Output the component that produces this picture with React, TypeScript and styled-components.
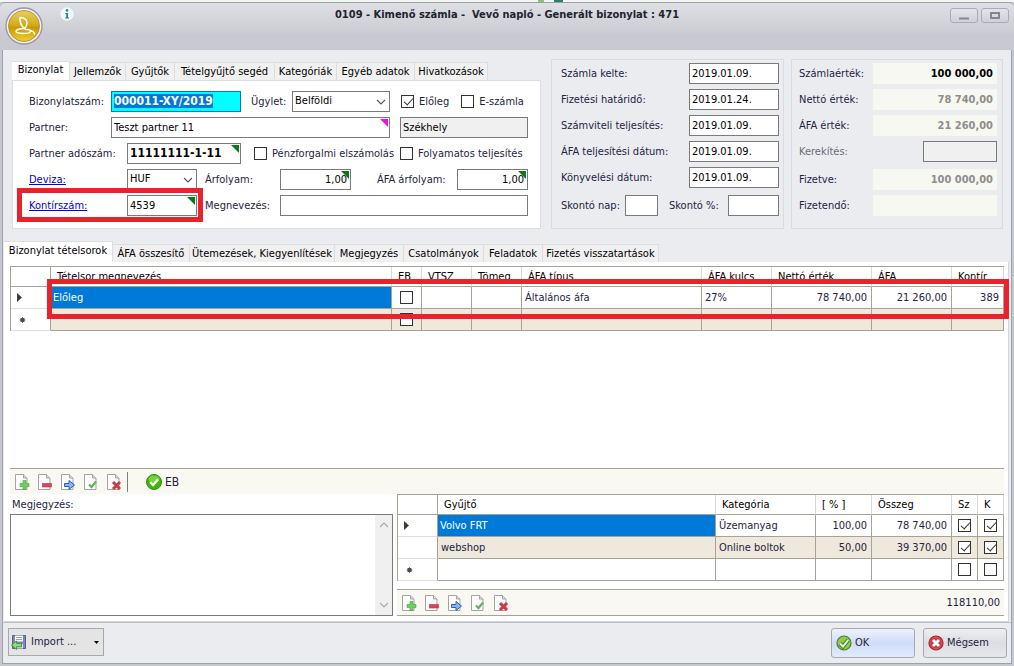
import React, { useEffect, useRef } from "react";
import styled, { createGlobalStyle, css } from "styled-components";

const ink = "#23233f";
const line = "#7a7a7a";
const gridLine = "#a5a396";
const blue = "#007ad9";
const red = "#e9222c";

const GlobalStyle = createGlobalStyle`
  * { box-sizing: border-box; }
  body { margin: 0; background: #c6c8cf; }
  body, input, select, textarea, button, table {
    font-family: "DejaVu Sans Condensed", "DejaVu Sans", sans-serif;
    font-size: 11px;
    line-height: 14px;
    color: ${ink};
  }
`;

/* ---------- window frame ---------- */

const Window = styled.div`
  min-height: 100vh;
  display: flex;
  flex-direction: column;
  background: #c6c8cf;
`;

const BackStrip = styled.div`
  height: 2px;
  flex: none;
  background: #f4f6f4;
  display: flex;
  justify-content: center;
  gap: 10px;
  padding-left: 86px;
`;

const StripMark = styled.span<{ $color: string; $width: number }>`
  width: ${(p) => p.$width}px;
  background: ${(p) => p.$color};
`;

const TitleBar = styled.header`
  height: 48px;
  flex: none;
  display: grid;
  grid-template-columns: 1fr auto 1fr;
  align-items: start;
  padding: 4px 5px 0 5px;
  border-top: 1px solid #9aa0a2;
  border-radius: 5px 5px 0 0;
  background: linear-gradient(#dfe0e5, #c9cad1 70%, #c8c9d0);
`;

const Brand = styled.div`
  display: flex;
  align-items: flex-start;
  gap: 17px;
`;

const Title = styled.h1`
  margin: 0;
  padding-top: 1px;
  font-size: 11px;
  line-height: 14px;
  font-weight: bold;
  white-space: pre;
  color: #22232e;
`;

const WindowButtons = styled.div`
  display: flex;
  justify-content: flex-end;
  gap: 3px;
`;

const WindowButton = styled.button`
  width: 28px;
  height: 15px;
  margin-top: 1px;
  padding: 0;
  display: grid;
  place-items: center;
  border: 1px solid #a9abb4;
  border-radius: 3px;
  background: linear-gradient(#e4e5ea, #cfd0d7);
`;

const Client = styled.main`
  flex: 1;
  display: flex;
  flex-direction: column;
  margin: 0 2px 2px;
  border: solid #9fa1aa;
  border-width: 0 1px 1px;
  background: #ebecf0;
`;

/* ---------- upper form ---------- */

const Upper = styled.div`
  display: flex;
  align-items: stretch;
  padding: 9px 8px 0 9px;
`;

const Header = styled.section`
  flex: 1;
  display: flex;
  flex-direction: column;
  padding-top: 2px;
  margin-right: 10px;
`;

const TabList = styled.div`
  display: flex;
  align-items: flex-end;
  height: 19px;
`;

const Tab = styled.button<{ $active?: boolean; $width: number }>`
  width: ${(p) => p.$width}px;
  height: 18px;
  padding: 0;
  border: 1px solid #dcdde1;
  border-width: 1px 1px 0 0;
  background: #f0f0f1;
  color: #000;
  white-space: nowrap;
  ${(p) =>
    p.$active &&
    css`
      height: 100%;
      padding-bottom: 3px;
      background: #fff;
    `}
`;

const FormPage = styled.form`
  flex: 1;
  display: flex;
  flex-direction: column;
  gap: 5px;
  padding: 10px 12px 12px 16px;
  border: 1px solid #dcdde1;
  background: #fff;
`;

const Row = styled.div<{ $cols: string }>`
  position: relative;
  display: grid;
  grid-template-columns: ${(p) => p.$cols};
  align-items: center;
  height: 21px;
`;

const Label = styled.label<{ $pad?: number; $dim?: boolean }>`
  padding-left: ${(p) => p.$pad ?? 0}px;
  padding-top: 1px;
  white-space: nowrap;
  ${(p) => p.$dim && "color: #6b6b78;"}
`;

const LinkLabel = styled.a`
  padding-top: 1px;
  color: #0000e0;
  text-decoration: underline;
`;

const Field = styled.input<{ $right?: boolean }>`
  width: 100%;
  height: 21px;
  padding: 0 3px 1px 2px;
  border: 1px solid ${line};
  border-radius: 0;
  outline: none;
  background: #fff;
  color: #000;
  text-align: ${(p) => (p.$right ? "right" : "left")};
`;

const NumberField = styled(Field)`
  border-color: #0078d7;
  background: #0ff;
  font-size: 12px;
  font-weight: bold;
  &::selection {
    background: #0078d7;
    color: #fff;
  }
`;

const BoldField = styled(Field)`
  font-size: 12px;
  font-weight: bold;
`;

const DisabledField = styled(Field)`
  background: #f0f0f0;
`;

const Marked = styled.div<{ $color?: string }>`
  position: relative;
  height: 21px;
  &::after {
    content: "";
    position: absolute;
    top: 2px;
    right: 2px;
    border: 4px solid;
    border-color: ${(p) => p.$color ?? "#0a7a16"} ${(p) => p.$color ?? "#0a7a16"} transparent transparent;
  }
`;

const SelectBox = styled.div`
  position: relative;
  height: 21px;
  svg {
    position: absolute;
    right: 4px;
    top: 8px;
    pointer-events: none;
  }
`;

const Select = styled.select`
  appearance: none;
  width: 100%;
  height: 21px;
  padding: 0 18px 1px 2px;
  border: 1px solid ${line};
  border-radius: 0;
  background: #fff;
  color: #000;
`;

const Check = styled.input.attrs({ type: "checkbox" })`
  appearance: none;
  position: relative;
  flex: none;
  width: 13px;
  height: 13px;
  margin: 0;
  border: 1px solid #333;
  background: #fff;
  &:checked::after {
    content: "";
    position: absolute;
    left: 4px;
    top: 0;
    width: 4px;
    height: 8px;
    border: solid #333;
    border-width: 0 1px 1px 0;
    transform: rotate(42deg);
  }
`;

const CheckLabel = styled.label<{ $pad?: number }>`
  display: flex;
  align-items: center;
  gap: 5px;
  padding-left: ${(p) => p.$pad ?? 0}px;
  white-space: nowrap;
`;

const Checks = styled.div`
  display: flex;
  gap: 12px;
  padding-left: 11px;
`;

const Inset = styled.div`
  padding-left: 10px;
`;

const Highlight = styled.div`
  position: absolute;
  border: 5px solid ${red};
  pointer-events: none;
`;

const AccountHighlight = styled(Highlight)`
  left: -12px;
  top: -7px;
  width: 186px;
  height: 34px;
`;

const LineHighlight = styled(Highlight)`
  left: 37px;
  right: -5px;
  top: 13px;
  height: 40px;
`;

const Group = styled.section<{ $width: number; $pad: string }>`
  flex: none;
  width: ${(p) => p.$width}px;
  display: flex;
  flex-direction: column;
  gap: 5px;
  padding: ${(p) => p.$pad};
  border: 1px solid #dadbdf;
  & + & {
    margin-left: 7px;
  }
`;

const Spaced = styled(Row)`
  margin-top: 2px;
`;

const Total = styled.output<{ $strong?: boolean }>`
  height: 21px;
  padding: 4px 4px 0 0;
  background: #f8f8f3;
  font-weight: bold;
  text-align: right;
  color: ${(p) => (p.$strong ? "#000" : "#8d8d8d")};
`;

/* ---------- line items ---------- */

const Lower = styled.section`
  flex: 1;
  display: flex;
  flex-direction: column;
  padding: 12px 2px 0 1px;
`;

const LowerTabs = styled(TabList)`
  height: 21px;
`;

const LowerPage = styled.div`
  flex: 1;
  display: flex;
  flex-direction: column;
  padding: 4px 4px 5px 6px;
  background: #fff;
  border: solid #d5d6da;
  border-width: 0 1px 1px 0;
`;

const GridArea = styled.div`
  position: relative;
  flex: 1;
`;

const Grid = styled.table`
  width: 100%;
  table-layout: fixed;
  border-spacing: 0;
  border: solid ${gridLine};
  border-width: 1px 0 0 1px;
  th {
    height: 20px;
    padding: 0 0 0 6px;
    border-right: 1px solid #d8d8d4;
    border-bottom: 1px solid ${gridLine};
    font-weight: normal;
    text-align: left;
    white-space: nowrap;
    color: #000;
  }
  th:first-child {
    border-right-color: ${gridLine};
  }
`;

const BodyRow = styled.tr<{ $shade?: boolean }>`
  td {
    background: ${(p) => (p.$shade ? "#eee9dc" : "#fff")};
  }
`;

type CellKind = "text" | "number" | "check" | "selected";

const Cell = styled.td<{ $kind?: CellKind }>`
  height: 22px;
  padding: 0 4px 0 3px;
  border: solid ${gridLine};
  border-width: 0 1px 1px 0;
  white-space: nowrap;
  ${(p) => p.$kind === "number" && "text-align: right;"}
  ${(p) =>
    p.$kind === "check" &&
    css`
      padding: 0;
      text-align: center;
      input {
        display: block;
        margin: 0 auto;
      }
    `}
  &&& {
    ${(p) => p.$kind === "selected" && `background: ${blue}; color: #fff; padding-left: 2px;`}
  }
`;

const RowHead = styled.th<{ scope?: string }>`
  &&& {
    height: 22px;
    border-right-color: ${gridLine};
    border-bottom-color: #dedede;
    padding-left: 6px;
  }
  && svg {
    display: block;
  }
`;

const ToolStrip = styled.div`
  display: flex;
  align-items: center;
  gap: 7px;
  height: 26px;
  flex: none;
  padding-left: 4px;
  border-top: 1px solid ${gridLine};
  background: #f9f8f3;
`;

const FooterStrip = styled(ToolStrip)`
  height: 27px;
  margin-top: 8px;
  border-bottom: 1px solid ${gridLine};
`;

const Tool = styled.button`
  width: 16px;
  height: 16px;
  padding: 0;
  border: 0;
  background: none;
  svg {
    display: block;
  }
`;

const Divider = styled.span`
  width: 1px;
  height: 20px;
  margin-left: -2px;
  background: #7d7d7d;
`;

const EbButton = styled.button`
  display: flex;
  align-items: center;
  gap: 3px;
  margin-left: 11px;
  padding: 0;
  border: 0;
  background: none;
  font-size: 12px;
`;

const Sum = styled.output`
  margin-left: auto;
  padding-right: 4px;
`;

const Split = styled.div`
  flex: none;
  display: grid;
  grid-template-columns: 383px 1fr;
  column-gap: 4px;
`;

const Notes = styled.div`
  display: flex;
  flex-direction: column;
  padding-top: 2px;
  label {
    padding: 2px 2px 0;
    height: 18px;
  }
`;

const NotesBox = styled.div`
  flex: 1;
  display: flex;
  border: 1px solid ${line};
`;

const NotesText = styled.textarea`
  flex: 1;
  min-width: 0;
  padding: 3px;
  border: 0;
  outline: none;
  resize: none;
  background: #fff;
`;

const ScrollTrack = styled.div`
  width: 17px;
  display: flex;
  flex-direction: column;
  justify-content: space-between;
  align-items: center;
  padding: 7px 0;
  background: #f0f0f0;
`;

const Collectors = styled.div`
  display: flex;
  flex-direction: column;
`;

/* ---------- bottom bar ---------- */

const BottomBar = styled.footer`
  flex: none;
  display: flex;
  align-items: flex-start;
  height: 41px;
  padding: 5px 4px 0 5px;
  border-top: 1px solid #bdbfc6;
`;

const ImportButton = styled.button`
  display: flex;
  align-items: center;
  gap: 4px;
  width: 96px;
  height: 28px;
  margin-right: auto;
  padding: 0 4px 0 2px;
  border: 1px solid #a8a8a8;
  background: #e4e4e4;
  span {
    flex: 1;
    text-align: left;
  }
`;

const ActionButton = styled.button<{ $primary?: boolean }>`
  display: flex;
  align-items: center;
  gap: 3px;
  width: 84px;
  height: 30px;
  margin-left: 8px;
  padding: 0 4px;
  border: 1px solid #a7a9b2;
  border-radius: 3px;
  background: ${(p) =>
    p.$primary ? "linear-gradient(#eef2fc, #cfdcf8 50%, #e2ebfd)" : "linear-gradient(#efeff2, #dcdde2 50%, #e6e7eb)"};
`;

/* ---------- drawings ---------- */

const Logo = () => (
  <svg width="38" height="38" viewBox="0 0 38 38" aria-hidden="true">
    <defs>
      <linearGradient id="gold" x1="0" y1="0" x2="0" y2="1">
        <stop offset="0" stopColor="#e9cf62" />
        <stop offset="0.45" stopColor="#d5ad1e" />
        <stop offset="0.55" stopColor="#c79a04" />
        <stop offset="1" stopColor="#f2cf2a" />
      </linearGradient>
    </defs>
    <circle cx="19" cy="19" r="18" fill="#f3f1f6" stroke="#9c98ac" strokeWidth="1.4" />
    <circle cx="19" cy="19" r="15.5" fill="url(#gold)" stroke="#b08a16" strokeWidth="0.8" />
    <path d="M15 10.500c4 0 7 2 7 5.500 0 2-1 4-2.500 5.500-3-2.500-5-6-4.500-11z" fill="none" stroke="#fff" strokeWidth="1.500" />
    <path d="M19.500 21.500c-4 0-8.500 1-8.500 2.800s4 2.200 7.500 2.200 7-.8 7-2.300-2.500-1.900-5-1.700M25.500 23.500c2 .2 3.500 1.500 4 3.500" fill="none" stroke="#fff" strokeWidth="1.500" strokeLinecap="round" />
  </svg>
);

const InfoIcon = () => (
  <svg width="14" height="14" viewBox="0 0 14 14" aria-hidden="true">
    <circle cx="7" cy="7" r="6.7" fill="#f2f7fa" />
    <circle cx="7" cy="3.4" r="1.3" fill="#159aa8" />
    <path d="M5.200 6h2.800v4.400h1v1h-3.800v-1h1V7h-1z" fill="#1683a0" />
  </svg>
);

const Chevron = ({ up, color = "#555" }: { up?: boolean; color?: string }) => (
  <svg width="10" height="6" viewBox="0 0 10 6" aria-hidden="true">
    <path d={up ? "M1 5l4-4 4 4" : "M1 1l4 4 4-4"} fill="none" stroke={color} strokeWidth="1.1" />
  </svg>
);

type Badge = "add" | "remove" | "move" | "accept" | "delete";

const badges: Record<Badge, React.ReactNode> = {
  add: <path d="M9 6.500h3v3h3v3h-3v3H9v-3H6v-3h3z" fill="#6fcf5c" stroke="#45a63f" strokeWidth="0.6" />,
  remove: <rect x="5.500" y="9.500" width="9" height="3.500" fill="#dd4557" stroke="#b83547" strokeWidth="0.6" />,
  move: <path d="M4.500 9.500h4.500v-3l5.500 4.500-5.500 4.500v-3H4.500z" fill="#8ab4f0" stroke="#2b5fb5" />,
  accept: <path d="M6 10.500l2.500 2.500 4.500-5.500" fill="none" stroke="#62b558" strokeWidth="2.200" />,
  delete: <path d="M7 8l7 7M14 8l-7 7" fill="none" stroke="#cf3a42" strokeWidth="3" />,
};

const PageIcon = ({ badge }: { badge: Badge }) => (
  <svg width="16" height="16" viewBox="0 0 16 16" aria-hidden="true">
    <path d="M1.500.5h8l3.500 3.500v11.500H1.500z" fill="#fdfdfd" />
    <path d="M9.500.5h-8v15H13V4z" fill="none" stroke="#a3a3a3" />
    <path d="M9.500.5V4H13" fill="#dcdcdc" stroke="#a3a3a3" />
    {badges[badge]}
  </svg>
);

const OkCircle = () => (
  <svg width="16" height="16" viewBox="0 0 16 16" aria-hidden="true">
    <circle cx="8" cy="8" r="7.500" fill="#42b50a" stroke="#2f8f06" />
    <ellipse cx="8" cy="5" rx="5.500" ry="3.500" fill="#74d33c" />
    <path d="M4.200 8l2.800 3 5-5.500" fill="none" stroke="#fff" strokeWidth="2.400" />
  </svg>
);

const AcceptIcon = () => (
  <svg width="16" height="16" viewBox="0 0 16 16" aria-hidden="true">
    <circle cx="8" cy="8" r="7" fill="#8ccb55" stroke="#4b7f27" strokeWidth="1.200" />
    <path d="M4 8.500l3 3 5.200-6.500" fill="none" stroke="#4b7f27" strokeWidth="4" />
    <path d="M4 8.500l3 3 5.200-6.500" fill="none" stroke="#e4f6d4" strokeWidth="2" />
  </svg>
);

const CancelIcon = () => (
  <svg width="16" height="16" viewBox="0 0 16 16" aria-hidden="true">
    <circle cx="8" cy="8" r="7" fill="#dc4a50" stroke="#a8242b" strokeWidth="1.200" />
    <path d="M4.800 4.800l6.400 6.400M11.200 4.800l-6.400 6.400" fill="none" stroke="#a8242b" strokeWidth="4.600" />
    <path d="M5 5l6 6M11 5l-6 6" fill="none" stroke="#fff" strokeWidth="3" />
  </svg>
);

const ImportIcon = () => (
  <svg width="16" height="16" viewBox="0 0 16 16" aria-hidden="true">
    <path d="M1.500 1.500h13v13h-13z" fill="#7e86c8" stroke="#565d9c" />
    <path d="M4 1.500h8v6H4z" fill="#f4f6fb" />
    <path d="M5 3.500h6M5 5.500h6" stroke="#9aa3b5" />
    <path d="M5 10h7v4.500H5z" fill="#dfe2ee" />
    <path d="M.5 11l5-4v2.400h5v3.400h-5v2.700z" fill="#8fdc7c" stroke="#3c9a35" />
  </svg>
);

const CurrentRow = () => (
  <svg width="6" height="9" viewBox="0 0 6 9" aria-label="Aktuális sor">
    <path d="M0 0l5 4.500L0 9z" fill="#3c3c3c" />
  </svg>
);

const NewRow = () => (
  <svg width="11" height="6" viewBox="0 0 11 6" aria-label="Új sor">
    <circle cx="5.500" cy="3" r="2.200" fill="#4a4a4a" />
    <path d="M5.500 0v6M2.500 3h6M3.500 1l4 4M7.500 1l-4 4" stroke="#4a4a4a" strokeWidth="0.700" />
  </svg>
);

/* ---------- data ---------- */

const formTabs: [string, number][] = [
  ["Bizonylat", 58],
  ["Jellemzők", 56],
  ["Gyűjtők", 49],
  ["Tételgyűjtő segéd", 100],
  ["Kategóriák", 62],
  ["Egyéb adatok", 78],
  ["Hivatkozások", 73],
];

const lineTabs: [string, number][] = [
  ["Bizonylat tételsorok", 109],
  ["ÁFA összesítő", 77],
  ["Ütemezések, Kiegyenlítések", 145],
  ["Megjegyzés", 69],
  ["Csatolmányok", 80],
  ["Feladatok", 59],
  ["Fizetés visszatartások", 116],
];

const dates: [string, string][] = [
  ["Számla kelte:", "2019.01.09."],
  ["Fizetési határidő:", "2019.01.24."],
  ["Számviteli teljesítés:", "2019.01.09."],
  ["ÁFA teljesítési dátum:", "2019.01.09."],
  ["Könyvelési dátum:", "2019.01.09."],
];

const tools: [Badge, string][] = [
  ["add", "Új"],
  ["remove", "Törlés"],
  ["move", "Áthelyezés"],
  ["accept", "Mentés"],
  ["delete", "Elvetés"],
];

const collectors = [
  { name: "Volvo FRT", category: "Üzemanyag", percent: "100,00", amount: "78 740,00" },
  { name: "webshop", category: "Online boltok", percent: "50,00", amount: "39 370,00" },
];

const Tools = () => (
  <>
    {tools.map(([badge, name]) => (
      <Tool key={badge} type="button" aria-label={name}>
        <PageIcon badge={badge} />
      </Tool>
    ))}
  </>
);

const Tabs = ({ items }: { items: [string, number][] }) => (
  <>
    {items.map(([name, width], i) => (
      <Tab key={name} type="button" role="tab" aria-selected={i === 0} $active={i === 0} $width={width}>
        {name}
      </Tab>
    ))}
  </>
);

export default function App() {
  const numberRef = useRef<HTMLInputElement>(null);

  useEffect(() => {
    numberRef.current?.focus();
    numberRef.current?.select();
  }, []);

  return (
    <Window>
      <GlobalStyle />
      <BackStrip>
        <StripMark $color="#8fc07a" $width={6} />
        <StripMark $color="#2f7f68" $width={9} />
      </BackStrip>
      <TitleBar>
        <Brand>
          <Logo />
          <InfoIcon />
        </Brand>
        <Title>{"0109 - Kimenő számla -  Vevő napló - Generált bizonylat : 471"}</Title>
        <WindowButtons>
          <WindowButton type="button" aria-label="Kis méret">
            <svg width="10" height="9" viewBox="0 0 10 9">
              <path d="M0 7.500h10" stroke="#85878f" strokeWidth="2" />
            </svg>
          </WindowButton>
          <WindowButton type="button" aria-label="Teljes méret">
            <svg width="10" height="7" viewBox="0 0 10 7">
              <path d="M1 1h8v5H1z" fill="none" stroke="#85878f" strokeWidth="2" />
            </svg>
          </WindowButton>
        </WindowButtons>
      </TitleBar>

      <Client>
        <Upper>
          <Header>
            <TabList role="tablist">
              <Tabs items={formTabs} />
            </TabList>
            <FormPage>
              <Row $cols="82px 130px 51px 98px 1fr">
                <Label htmlFor="number">Bizonylatszám:</Label>
                <NumberField id="number" ref={numberRef} defaultValue="000011-XY/2019" />
                <Label htmlFor="deal" $pad={10}>Ügylet:</Label>
                <SelectBox>
                  <Select id="deal"><option>Belföldi</option></Select>
                  <Chevron />
                </SelectBox>
                <Checks>
                  <CheckLabel><Check defaultChecked />Előleg</CheckLabel>
                  <CheckLabel><Check />E-számla</CheckLabel>
                </Checks>
              </Row>
              <Row $cols="82px 279px 1fr">
                <Label htmlFor="partner">Partner:</Label>
                <Marked $color="#ee12dd">
                  <Field id="partner" defaultValue="Teszt partner 11" />
                </Marked>
                <Inset>
                  <DisabledField aria-label="Telephely" readOnly value="Székhely" />
                </Inset>
              </Row>
              <Row $cols="98px 114px 159px 1fr">
                <Label htmlFor="tax">Partner adószám:</Label>
                <Marked>
                  <BoldField id="tax" defaultValue="11111111-1-11" />
                </Marked>
                <CheckLabel $pad={13}><Check />Pénzforgalmi elszámolás</CheckLabel>
                <CheckLabel><Check />Folyamatos teljesítés</CheckLabel>
              </Row>
              <Row $cols="98px 70px 83px 71px 106px 1fr">
                <LinkLabel href="#deviza">Deviza:</LinkLabel>
                <SelectBox>
                  <Select aria-label="Deviza"><option>HUF</option></Select>
                  <Chevron />
                </SelectBox>
                <Label htmlFor="rate" $pad={8}>Árfolyam:</Label>
                <Marked>
                  <Field id="rate" $right defaultValue="1,00" />
                </Marked>
                <Label htmlFor="vatrate" $pad={26}>ÁFA árfolyam:</Label>
                <Marked>
                  <Field id="vatrate" $right defaultValue="1,00" />
                </Marked>
              </Row>
              <Row $cols="98px 70px 83px 1fr">
                <LinkLabel href="#kontirszam">Kontírszám:</LinkLabel>
                <Marked>
                  <Field aria-label="Kontírszám" defaultValue="4539" />
                </Marked>
                <Label htmlFor="name" $pad={8}>Megnevezés:</Label>
                <Field id="name" />
                <AccountHighlight />
              </Row>
            </FormPage>
          </Header>

          <Group $width={233} $pad="3px 4px 12px 9px">
            {dates.map(([name, value], i) => (
              <Row key={name} $cols="1fr 90px">
                <Label htmlFor={`date${i}`}>{name}</Label>
                <Field id={`date${i}`} defaultValue={value} />
              </Row>
            ))}
            <Spaced $cols="64px 33px 1fr 51px">
              <Label htmlFor="days">Skontó nap:</Label>
              <Field id="days" />
              <Label htmlFor="percent" $pad={11}>Skontó %:</Label>
              <Field id="percent" />
            </Spaced>
          </Group>

          <Group $width={212} $pad="3px 5px 12px 7px">
            <Row $cols="1fr 124px">
              <Label as="span">Számlaérték:</Label>
              <Total $strong>100 000,00</Total>
            </Row>
            <Row $cols="1fr 124px">
              <Label as="span">Nettó érték:</Label>
              <Total>78 740,00</Total>
            </Row>
            <Row $cols="1fr 124px">
              <Label as="span">ÁFA érték:</Label>
              <Total>21 260,00</Total>
            </Row>
            <Row $cols="1fr 74px">
              <Label htmlFor="rounding" $dim>Kerekítés:</Label>
              <DisabledField id="rounding" disabled />
            </Row>
            <Spaced $cols="1fr 124px">
              <Label as="span">Fizetve:</Label>
              <Total>100 000,00</Total>
            </Spaced>
            <Row $cols="1fr 124px">
              <Label as="span">Fizetendő:</Label>
              <Total />
            </Row>
          </Group>
        </Upper>

        <Lower>
          <LowerTabs role="tablist">
            <Tabs items={lineTabs} />
          </LowerTabs>
          <LowerPage>
            <GridArea>
              <Grid>
                <colgroup>
                  <col width="40" />
                  <col />
                  <col width="30" />
                  <col width="50" />
                  <col width="50" />
                  <col width="180" />
                  <col width="70" />
                  <col width="100" />
                  <col width="80" />
                  <col width="52" />
                </colgroup>
                <thead>
                  <tr>
                    <th />
                    <th>Tételsor megnevezés</th>
                    <th>EB</th>
                    <th>VTSZ</th>
                    <th>Tömeg</th>
                    <th>ÁFA típus</th>
                    <th>ÁFA kulcs</th>
                    <th>Nettó érték</th>
                    <th>ÁFA</th>
                    <th>Kontír</th>
                  </tr>
                </thead>
                <tbody>
                  <BodyRow>
                    <RowHead scope="row"><CurrentRow /></RowHead>
                    <Cell $kind="selected">Előleg</Cell>
                    <Cell $kind="check"><Check aria-label="EB" /></Cell>
                    <Cell />
                    <Cell />
                    <Cell>Általános áfa</Cell>
                    <Cell>27%</Cell>
                    <Cell $kind="number">78 740,00</Cell>
                    <Cell $kind="number">21 260,00</Cell>
                    <Cell $kind="number">389</Cell>
                  </BodyRow>
                  <BodyRow $shade>
                    <RowHead scope="row"><NewRow /></RowHead>
                    <Cell />
                    <Cell $kind="check"><Check aria-label="EB" /></Cell>
                    <Cell />
                    <Cell />
                    <Cell />
                    <Cell />
                    <Cell />
                    <Cell />
                    <Cell />
                  </BodyRow>
                </tbody>
              </Grid>
              <LineHighlight />
            </GridArea>

            <ToolStrip>
              <Tools />
              <Divider />
              <EbButton type="button"><OkCircle />EB</EbButton>
            </ToolStrip>

            <Split>
              <Notes>
                <label htmlFor="notes">Megjegyzés:</label>
                <NotesBox>
                  <NotesText id="notes" rows={1} />
                  <ScrollTrack>
                    <Chevron up color="#a9a9a9" />
                    <Chevron color="#a9a9a9" />
                  </ScrollTrack>
                </NotesBox>
              </Notes>
              <Collectors>
                <Grid>
                  <colgroup>
                    <col width="40" />
                    <col />
                    <col width="100" />
                    <col width="56" />
                    <col width="80" />
                    <col width="26" />
                    <col width="26" />
                  </colgroup>
                  <thead>
                    <tr>
                      <th />
                      <th>Gyűjtő</th>
                      <th>Kategória</th>
                      <th>[ % ]</th>
                      <th>Összeg</th>
                      <th>Sz</th>
                      <th>K</th>
                    </tr>
                  </thead>
                  <tbody>
                    {collectors.map((c, i) => (
                      <BodyRow key={c.name} $shade={i === 1}>
                        <RowHead scope="row">{i === 0 && <CurrentRow />}</RowHead>
                        <Cell $kind={i === 0 ? "selected" : "text"}>{c.name}</Cell>
                        <Cell>{c.category}</Cell>
                        <Cell $kind="number">{c.percent}</Cell>
                        <Cell $kind="number">{c.amount}</Cell>
                        <Cell $kind="check"><Check aria-label="Sz" defaultChecked /></Cell>
                        <Cell $kind="check"><Check aria-label="K" defaultChecked /></Cell>
                      </BodyRow>
                    ))}
                    <BodyRow>
                      <RowHead scope="row"><NewRow /></RowHead>
                      <Cell />
                      <Cell />
                      <Cell />
                      <Cell />
                      <Cell $kind="check"><Check aria-label="Sz" /></Cell>
                      <Cell $kind="check"><Check aria-label="K" /></Cell>
                    </BodyRow>
                  </tbody>
                </Grid>
                <FooterStrip>
                  <Tools />
                  <Sum>118110,00</Sum>
                </FooterStrip>
              </Collectors>
            </Split>
          </LowerPage>
        </Lower>

        <BottomBar>
          <ImportButton type="button">
            <ImportIcon />
            <span>Import ...</span>
            <svg width="5" height="3" viewBox="0 0 5 3" aria-hidden="true">
              <path d="M0 0h5L2.500 3z" fill="#000" />
            </svg>
          </ImportButton>
          <ActionButton type="button" $primary><AcceptIcon />OK</ActionButton>
          <ActionButton type="button"><CancelIcon />Mégsem</ActionButton>
        </BottomBar>
      </Client>
    </Window>
  );
}
